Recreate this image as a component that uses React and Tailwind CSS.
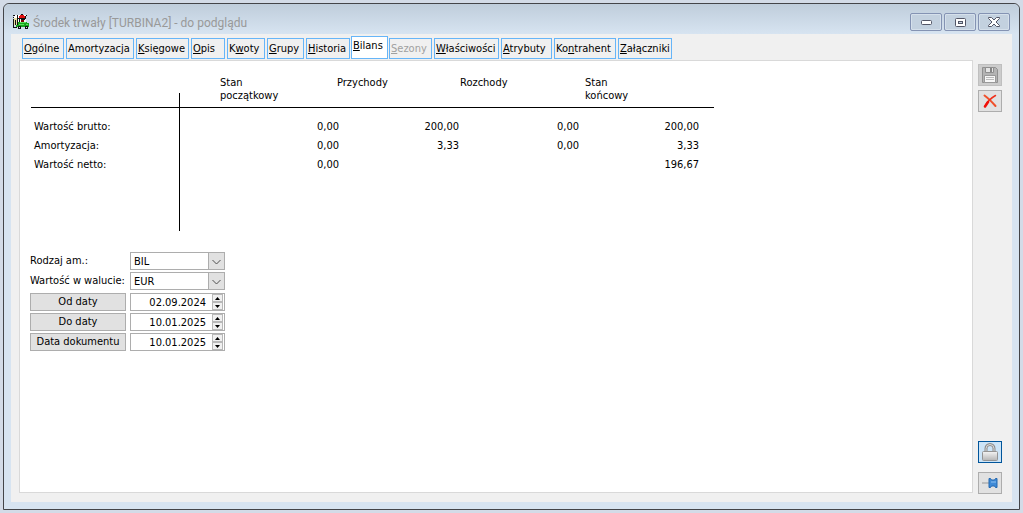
import { useState } from 'react';

const tabs = [
  { name: 'Ogólne', key: 0, width: 'w-[42px]' },
  { name: 'Amortyzacja', key: -1, width: 'w-[68px]' },
  { name: 'Księgowe', key: 0, width: 'w-[53px]' },
  { name: 'Opis', key: 0, width: 'w-[34px]' },
  { name: 'Kwoty', key: 1, width: 'w-[38px]' },
  { name: 'Grupy', key: 0, width: 'w-[37px]' },
  { name: 'Historia', key: 0, width: 'w-[44px]' },
  { name: 'Bilans', key: 0, width: 'w-[37px]' },
  { name: 'Sezony', key: 0, width: 'w-[43px]', disabled: true },
  { name: 'Właściwości', key: 0, width: 'w-[65px]' },
  { name: 'Atrybuty', key: 0, width: 'w-[51px]' },
  { name: 'Kontrahent', key: 2, width: 'w-[62px]' },
  { name: 'Załączniki', key: 0, width: 'w-[54px]' },
];

const rows = [
  { label: 'Wartość brutto:', values: ['0,00', '200,00', '0,00', '200,00'] },
  { label: 'Amortyzacja:', values: ['0,00', '3,33', '0,00', '3,33'] },
  { label: 'Wartość netto:', values: ['0,00', '', '', '196,67'] },
];

function AppIcon() {
  return (
    <svg width="16" height="16" viewBox="0 0 16 16" shapeRendering="crispEdges" className="shrink-0">
      <path fill="#fff" d="M1 1h12v8H1z" />
      <path fill="#e8dfa0" d="M1 4h3v7H1z" />
      <path fill="#111" d="M0 1h2v1H0zM0 3h1v1H0zM0 5h1v8H0zM4 1h1v10H4zM2 6h1v5H2zM13 1h1v1h-1z" />
      <path fill="#e01010" d="M7 1h4v1h1v2H6V2h1z" />
      <path fill="#111" d="M8 0h2v1H8zM5 4h8v1H5zM12 2h1v3h-1zM6 5h1v3H6zM8 5h4v1H8z" />
      <path fill="#700" d="M8 6h3v2H8z" />
      <path fill="#f4f4f4" d="M11 6h2v2h-2z" />
      <path fill="#16a51c" d="M5 8h9v1h2v4H3v-2h2z" />
      <path fill="#5fe05f" d="M7 8h6v1H7zM6 10h5v1H6zM13 10h2v1h-2z" />
      <path fill="#111" d="M5 12h3v3H5zM12 12h3v3h-3zM0 13h4v1H0z" />
      <path fill="#ddd" d="M6 13h1v1H6zM13 13h1v1h-1z" />
    </svg>
  );
}

function CaptionButton({ label, children }) {
  return (
    <button
      type="button"
      aria-label={label}
      className="flex h-[18px] w-8 items-center justify-center rounded-xs border border-[#8493b3] bg-[#c3d1df] shadow-[inset_0_0_0_1px_#d5e0eb]"
    >
      {children}
    </button>
  );
}

function ToolButton({ label, className = 'border-[#adadad] bg-[#e1e1e1]', ...props }) {
  return (
    <button
      type="button"
      aria-label={label}
      className={`flex h-[22px] w-6 items-center justify-center border ${className}`}
      {...props}
    />
  );
}

function Tab({ tab, active, onClick }) {
  const { name, key, width, disabled } = tab;
  let style = 'h-[21px] bg-[#f0f0f0]';
  if (active) style = '-mx-px h-[23px] bg-white pb-1';
  return (
    <button
      type="button"
      role="tab"
      aria-selected={active}
      disabled={disabled}
      onClick={onClick}
      className={`flex shrink-0 items-center border border-[#66b5f8] pl-px whitespace-nowrap ${width} ${style} ${
        disabled ? 'text-[#a0a0a0]' : ''
      }`}
    >
      {key < 0 ? (
        name
      ) : (
        <span>
          {name.slice(0, key)}
          <u className="underline-offset-1">{name[key]}</u>
          {name.slice(key + 1)}
        </span>
      )}
    </button>
  );
}

function BalanceTable() {
  return (
    <table className="w-[683px] table-fixed border-separate border-spacing-0">
      {/* headings and amounts overlap slightly, so they span different columns */}
      <colgroup>
        <col className="w-[149px]" />
        <col className="w-[157px]" />
        <col className="w-[3px]" />
        <col className="w-[120px]" />
        <col className="w-[120px]" />
        <col className="w-[5px]" />
        <col />
      </colgroup>
      <thead>
        <tr className="h-8 text-left align-top leading-[13px]">
          <td className="border-b border-black p-0 align-bottom">
            <div className="h-[14px] border-r border-black" />
          </td>
          <th className="border-b border-black p-0 pl-10 font-normal">Stan<br />początkowy</th>
          <th colSpan={2} className="border-b border-black p-0 font-normal">Przychody</th>
          <th colSpan={2} className="border-b border-black p-0 font-normal">Rozchody</th>
          <th className="border-b border-black p-0 font-normal">Stan<br />końcowy</th>
        </tr>
      </thead>
      <tbody>
        <tr className="h-[9px]">
          <td className="border-r border-black p-0" />
        </tr>
        {rows.map((row) => (
          <tr key={row.label} className="h-[19px] text-right">
            <th className="border-r border-black p-0 pl-[3px] text-left font-normal">{row.label}</th>
            <td colSpan={2} className="p-0 pr-px">{row.values[0]}</td>
            <td className="p-0 pr-px">{row.values[1]}</td>
            <td className="p-0 pr-px">{row.values[2]}</td>
            <td colSpan={2} className="p-0 pr-[15px]">{row.values[3]}</td>
          </tr>
        ))}
        <tr className="h-[57px]">
          <td className="border-r border-black p-0" />
        </tr>
      </tbody>
    </table>
  );
}

function SelectRow({ id, label, options }) {
  return (
    <div className="flex h-[18px] items-center">
      <label htmlFor={id} className="w-[100px] shrink-0 pb-0.5 whitespace-nowrap">{label}</label>
      <div className="relative">
        <select
          id={id}
          className="block h-[18px] w-[95px] appearance-none border border-[#adadad] bg-white pl-[3px] outline-none"
        >
          {options.map((o) => (
            <option key={o}>{o}</option>
          ))}
        </select>
        <span className="pointer-events-none absolute top-0 right-0 flex h-[18px] w-[17px] items-center justify-center border border-[#adadad] bg-[#e1e1e1] pt-0.5">
          <svg width="9" height="6" viewBox="0 0 9 6" fill="none" stroke="#505050">
            <path d="M.5 1l4 4 4-4" />
          </svg>
        </span>
      </div>
    </div>
  );
}

function DateRow({ label, value }) {
  const [date, setDate] = useState(value);
  return (
    <div className="flex h-[18px] gap-1">
      <button type="button" className="w-24 border border-[#adadad] bg-[#e1e1e1] leading-4">{label}</button>
      <div className="flex w-[95px] border border-[#adadad] bg-white pr-px">
        <input
          aria-label={label}
          value={date}
          onChange={(e) => setDate(e.target.value)}
          className="w-full min-w-0 pr-1.5 text-right outline-none"
        />
        <div className="flex w-[11px] shrink-0 flex-col">
          <button type="button" aria-label="Zwiększ" className="flex flex-1 items-center justify-center border border-[#b8b8b8] bg-[#f0f0f0]">
            <svg width="5" height="3" viewBox="0 0 5 3" className="shrink-0"><path d="M0 3l2.500-3L5 3z" /></svg>
          </button>
          <button type="button" aria-label="Zmniejsz" className="flex flex-1 items-center justify-center border border-[#b8b8b8] bg-[#f0f0f0]">
            <svg width="5" height="3" viewBox="0 0 5 3" className="shrink-0"><path d="M0 0h5L2.500 3z" /></svg>
          </button>
        </div>
      </div>
    </div>
  );
}

export default function App() {
  const [active, setActive] = useState('Bilans');

  return (
    <div className="flex h-screen bg-[#d3dbe7] p-[3px] font-['DejaVu_Sans_Condensed','DejaVu_Sans',sans-serif] text-[11px] leading-[13px] text-black">
      <div className="flex min-w-0 flex-1 flex-col rounded-t-md border border-[#444549] bg-[#d7e4f1] px-[7px] pb-[7px]">
        {/* Title bar */}
        <header className="-mx-[7px] flex h-[30px] shrink-0 items-center rounded-t-md bg-linear-to-b from-[#bfcddb] to-[#d7e4f1] pt-1.5 pr-[9px] pl-[9px]">
          <AppIcon />
          <h1 className="flex-1 pt-0.5 pl-1 font-['Roboto',sans-serif] text-xs text-[#999]">
            Środek trwały [TURBINA2] - do podglądu
          </h1>
          <div className="flex gap-0.5">
            <CaptionButton label="Minimalizuj">
              <svg width="11" height="5" viewBox="0 0 11 5"><rect x=".5" y=".5" width="10" height="4" rx="1" fill="#fff" stroke="#535666" /></svg>
            </CaptionButton>
            <CaptionButton label="Maksymalizuj">
              <svg width="11" height="9" viewBox="0 0 11 9" stroke="#535666">
                <rect x=".5" y=".5" width="10" height="8" rx="1" fill="#fff" />
                <rect x="3.500" y="3.500" width="4" height="2" fill="#c3d1df" />
              </svg>
            </CaptionButton>
            <CaptionButton label="Zamknij">
              <svg width="12" height="10" viewBox="0 0 12 10">
                <path d="M.5.5h3L6 3 8.500.5h3v1L8 5l3.500 3.500v1h-3L6 7 3.500 9.500h-3v-1L4 5 .5 1.500z" fill="#fff" stroke="#535666" />
              </svg>
            </CaptionButton>
          </div>
        </header>

        <div className="flex min-h-0 flex-1 bg-[#f0f0f0] pl-2">
          <main className="flex min-w-0 flex-1 flex-col pt-0.5 pb-[9px]">
            <div role="tablist" className="flex h-6 shrink-0 items-end gap-0.5 pb-px pl-[3px]">
              {tabs.map((tab) => (
                <Tab key={tab.name} tab={tab} active={active === tab.name} onClick={() => setActive(tab.name)} />
              ))}
            </div>

            <section className="min-h-0 flex-1 border border-[#d9d9d9] bg-white pt-[15px] pl-[11px]">
              <BalanceTable />
              <form className="-ml-px flex flex-col gap-[3px] pt-[21px]" onSubmit={(e) => e.preventDefault()}>
                <div className="flex flex-col gap-0.5">
                  <SelectRow id="rodzaj" label="Rodzaj am.:" options={['BIL', 'POD']} />
                  <SelectRow id="waluta" label="Wartość w walucie:" options={['EUR', 'PLN']} />
                </div>
                <div className="flex flex-col gap-0.5">
                  <DateRow label="Od daty" value="02.09.2024" />
                  <DateRow label="Do daty" value="10.01.2025" />
                  <DateRow label="Data dokumentu" value="10.01.2025" />
                </div>
              </form>
            </section>
          </main>

          {/* Side toolbar */}
          <aside className="flex flex-col gap-1 pt-[30px] pr-[10px] pb-2 pl-[5px]">
            <ToolButton label="Zapisz" disabled className="border-[#bfbfbf] bg-[#cccccc]">
              <svg width="16" height="16" viewBox="0 0 16 16">
                <path d="M.5.500h13l2 2v13H.5z" fill="#b4b4b4" stroke="#909090" />
                <path d="M3.500.5h8v5h-8z" fill="#e4e4e4" stroke="#8e8e8e" />
                <path d="M8 1h2v4H8z" fill="#858585" />
                <path d="M2.500 8.500h11v7h-11z" fill="#f7f7f7" stroke="#999" />
                <path d="M4 10.500h8M4 12.500h8" stroke="#bbb" />
              </svg>
            </ToolButton>
            <ToolButton label="Anuluj">
              <svg width="14" height="14" viewBox="0 0 14 14" fill="none" strokeLinecap="round">
                <path d="M1.500 1.500C5 4 9 8 12.500 12" stroke="#f0502a" strokeWidth="2" />
                <path d="M12.500 1.500C8 4 4 8 2 12.500" stroke="#f0301a" strokeWidth="1.500" />
                <path d="M5 8L2 12.500" stroke="#f0100a" strokeWidth="2.500" />
              </svg>
            </ToolButton>
            <div className="mt-auto flex flex-col gap-[9px]">
              <ToolButton label="Blokada" className="border-[#00559b] bg-[#cce4f7]">
                <svg width="16" height="18" viewBox="0 0 16 18">
                  <defs>
                    <linearGradient id="lock" x1="0" y1="0" x2="0" y2="1">
                      <stop offset="0" stopColor="#f4f4f4" />
                      <stop offset="1" stopColor="#b5b5b5" />
                    </linearGradient>
                  </defs>
                  <path d="M4 9V5.500a4 4 0 0 1 8 0V9" fill="none" stroke="#8c8c8c" strokeWidth="3" />
                  <path d="M4 9V5.500a4 4 0 0 1 8 0V9" fill="none" stroke="#dcdcdc" strokeWidth="1" />
                  <rect x=".5" y="8.500" width="15" height="9" rx="1" fill="url(#lock)" stroke="#949494" />
                </svg>
              </ToolButton>
              <ToolButton label="Przypnij">
                <svg width="16" height="12" viewBox="0 0 16 12">
                  <path d="M0 6h7" stroke="#999" />
                  <path d="M7 1.500h1.500l1 1.500h3l1-1.500H15v9h-1.500l-1-1.500h-3l-1 1.500H7z" fill="#3f8ad6" stroke="#2468b0" />
                  <path d="M9 5h5" stroke="#8cc0f2" />
                </svg>
              </ToolButton>
            </div>
          </aside>
        </div>
      </div>
    </div>
  );
}
